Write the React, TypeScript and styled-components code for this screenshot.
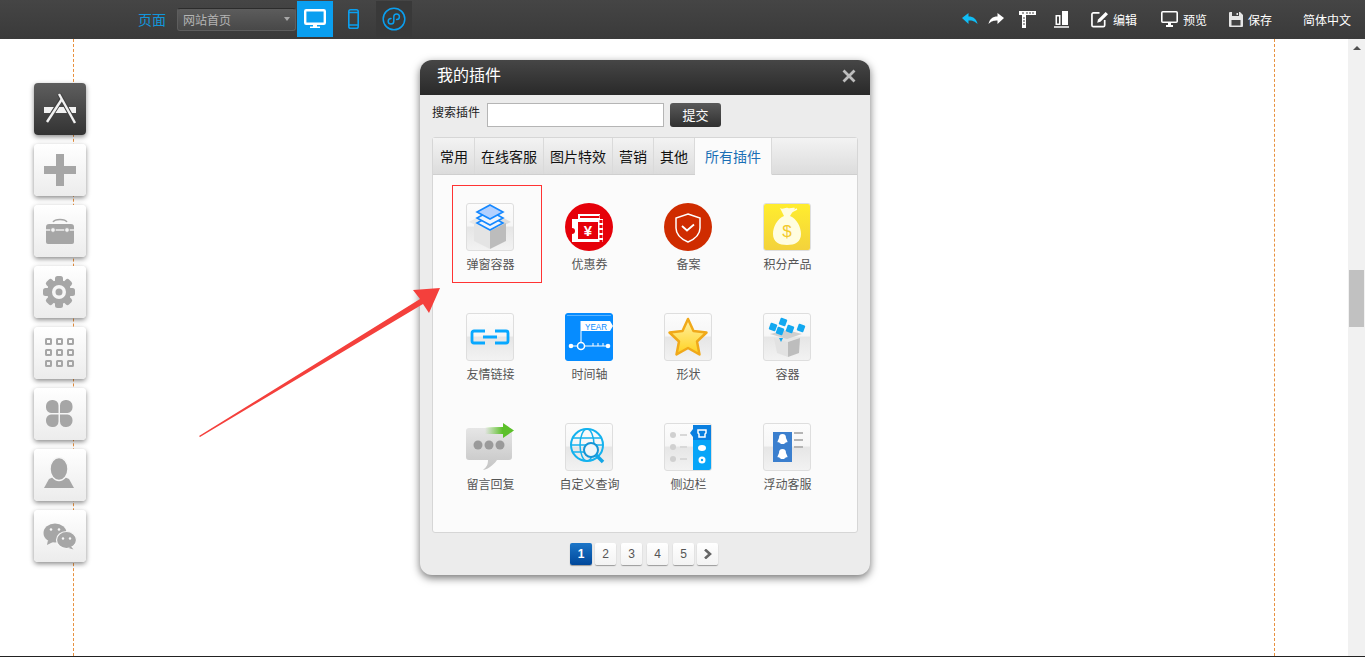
import React, { ReactNode } from 'react'
import styled, { createGlobalStyle } from 'styled-components'

const GlobalStyle = createGlobalStyle`
  html, body {
    margin: 0;
    height: 100%;
    overflow: hidden;
    background: #fff;
    font-family: "Liberation Sans", "Noto Sans CJK SC", sans-serif;
  }
`

const Page = styled.div`
  height: 657px;
  box-sizing: border-box;
  border-bottom: 1px solid #222;
  display: flex;
  flex-direction: column;
  position: relative;
  overflow: hidden;
`

/* top bar */
const TopBar = styled.header`
  flex: none;
  height: 39px;
  box-sizing: border-box;
  padding: 1px 14px 2px 138px;
  display: flex;
  align-items: center;
  background: linear-gradient(#454545, #3a3a3a);
`

const PageLabel = styled.span`
  font-size: 14px;
  color: #1296db;
  margin-right: 11px;
`

const PageSelect = styled.div`
  width: 119px;
  height: 23px;
  box-sizing: border-box;
  padding-left: 5px;
  margin-right: 1px;
  display: flex;
  align-items: center;
  justify-content: space-between;
  font-size: 12px;
  color: #b4b4b4;
  background: linear-gradient(#5c5c5c, #484848);
  border: 1px solid #5e5e5e;
  border-top-color: #2c2c2c;
  border-radius: 3px;

  &::after {
    content: '';
    margin-right: 5px;
    border-left: 3px solid transparent;
    border-right: 3px solid transparent;
    border-top: 4px solid #a8a8a8;
  }
`

const DeviceButton = styled.button<{ $active?: boolean; $dark?: boolean; $width: number }>`
  width: ${({ $width }) => $width}px;
  height: 36px;
  padding: 0;
  border: 0;
  margin-left: ${({ $dark }) => ($dark ? 3 : 0)}px;
  display: flex;
  align-items: center;
  justify-content: center;
  background: ${({ $active, $dark }) => ($active ? '#0a9ff0' : $dark ? '#393939' : 'transparent')};
`

const TopActions = styled.div`
  margin-left: auto;
  display: flex;
  align-items: center;
`

const TopAction = styled.span<{ $left: number }>`
  margin-left: ${({ $left }) => $left}px;
  display: flex;
  align-items: center;
  gap: 5px;
  font-size: 12px;
  color: #fff;
`

/* scrolling area */
const Body = styled.main`
  flex: 1;
  min-height: 0;
  display: flex;
`

const Workspace = styled.div`
  flex: 1;
  padding-left: 73px;
`

const SiteFrame = styled.div`
  width: 1202px;
  height: 100%;
  box-sizing: border-box;
  border-left: 1px dashed #e8913f;
  border-right: 1px dashed #e8913f;
`

const ScrollTrack = styled.div`
  flex: none;
  width: 17px;
  background: #f1f1f1;
  display: flex;
  flex-direction: column;
  align-items: center;

  &::before {
    content: '';
    margin-top: 7px;
    border-left: 4px solid transparent;
    border-right: 4px solid transparent;
    border-bottom: 4px solid #505050;
  }
`

const ScrollThumb = styled.div`
  width: 15px;
  height: 57px;
  margin-top: 220px;
  background: #c1c1c1;
`

/* left tool column */
const ToolColumn = styled.nav`
  position: absolute;
  left: 34px;
  top: 83px;
  display: flex;
  flex-direction: column;
  gap: 9px;
`

const ToolButton = styled.div<{ $active?: boolean }>`
  width: 52px;
  height: 52px;
  border-radius: 4px;
  background: ${({ $active }) =>
    $active ? 'linear-gradient(#5e5e5e, #333)' : 'linear-gradient(#fff, #ececec)'};
  box-shadow: 0 2px 5px rgba(0, 0, 0, 0.45);

  svg {
    display: block;
  }
`

/* plugin dialog */
const Dialog = styled.section`
  position: absolute;
  left: 420px;
  top: 60px;
  width: 450px;
  height: 515px;
  border-radius: 12px;
  background: #ececec;
  box-shadow: 0 3px 9px rgba(0, 0, 0, 0.55);
  display: flex;
  flex-direction: column;
`

const DialogHeader = styled.div`
  flex: none;
  height: 35px;
  box-sizing: border-box;
  padding: 0 14px 4px 17px;
  display: flex;
  align-items: center;
  justify-content: space-between;
  border-radius: 12px 12px 0 0;
  background: linear-gradient(#464646, #292929);
  color: #fff;
  font-size: 16px;
`

const DialogTitle = styled.span`
  margin-top: -3px;
`

const SearchRow = styled.form`
  flex: none;
  height: 24px;
  margin-top: 8px;
  padding-left: 12px;
  display: flex;
  align-items: flex-start;
`

const SearchLabel = styled.label`
  width: 55px;
  font-size: 12px;
  line-height: 20px;
  color: #222;
`

const SearchInput = styled.input`
  width: 177px;
  height: 24px;
  box-sizing: border-box;
  border: 1px solid #b5b5b5;
  background: #fff;
  margin: 0 6px 0 0;
`

const SubmitButton = styled.button`
  width: 51px;
  height: 24px;
  padding: 0 0 2px;
  border: 0;
  border-radius: 3px;
  color: #fff;
  font-size: 13px;
  font-family: inherit;
  background: linear-gradient(#5a5a5a, #303030);
`

const TabPanel = styled.div`
  flex: none;
  width: 426px;
  height: 396px;
  box-sizing: border-box;
  margin: 10px 0 0 12px;
  border: 1px solid #d6d6d6;
  border-radius: 3px;
  background: #fbfbfb;
`

const TabBar = styled.div`
  height: 37px;
  box-sizing: border-box;
  padding-left: 1px;
  display: flex;
  background: linear-gradient(#f3f3f3, #dcdcdc);
  border-bottom: 1px solid #cfcfcf;
`

const Tab = styled.div<{ $active?: boolean }>`
  padding: 0 ${({ $active }) => ($active ? 10 : 6)}px;
  height: 36px;
  margin-bottom: ${({ $active }) => ($active ? -1 : 0)}px;
  box-sizing: content-box;
  display: flex;
  align-items: center;
  font-size: 14px;
  border-right: 1px solid #dadada;
  border-bottom: ${({ $active }) => ($active ? '1px solid #fbfbfb' : '0')};
  color: ${({ $active }) => ($active ? '#1a6fb5' : '#111')};
  background: ${({ $active }) => ($active ? '#fbfbfb' : 'transparent')};
`

const PluginGrid = styled.div`
  padding: 28px 0 0 7px;
  display: grid;
  grid-template-columns: repeat(4, 99px);
  grid-auto-rows: 110px;
`

const PluginItem = styled.div`
  display: flex;
  flex-direction: column;
  align-items: center;
  gap: 7px;
  font-size: 12px;
  line-height: 14px;
  color: #555;
`

const PluginName = styled.span`
  margin-left: 2px;
`

const IconBox = styled.div<{ $plain?: boolean }>`
  width: 48px;
  height: 48px;
  box-sizing: border-box;
  border-radius: 3px;
  overflow: hidden;
  border: ${({ $plain }) => ($plain ? '0' : '1px solid #dedede')};
  background: ${({ $plain }) =>
    $plain ? 'transparent' : 'linear-gradient(#fcfcfc 0, #f6f6f6 48%, #e6e6e6 50%, #f2f2f2 100%)'};

  svg {
    display: block;
    width: 100%;
    height: 100%;
  }
`

const Pager = styled.div`
  flex: none;
  margin-top: 10px;
  padding-left: 150px;
  display: flex;
  gap: 5px;
`

const PageButton = styled.div<{ $active?: boolean; $arrow?: boolean }>`
  width: ${({ $active }) => ($active ? 22 : 21)}px;
  height: 22px;
  margin-right: ${({ $active }) => ($active ? -2 : 0)}px;
  margin-left: ${({ $arrow }) => ($arrow ? -2 : 0)}px;
  border-radius: 2px;
  display: flex;
  align-items: center;
  justify-content: center;
  font-size: 12px;
  font-weight: ${({ $active }) => ($active ? 700 : 400)};
  color: ${({ $active }) => ($active ? '#fff' : '#555')};
  background: ${({ $active }) => ($active ? 'linear-gradient(#1c76c8, #00479a)' : 'linear-gradient(#fff, #f3f3f3)')};
  box-shadow: 0 1px 1px rgba(0, 0, 0, 0.35);
`

/* annotations drawn over the screenshot */
const RedFrame = styled.div`
  position: absolute;
  left: 452px;
  top: 185px;
  width: 90px;
  height: 98px;
  box-sizing: border-box;
  border: 1px solid #f33;
`

const RedArrow = styled.svg`
  position: absolute;
  left: 195px;
  top: 283px;
`

const GREY = '#a6a6a6'

const Tool = ({ children }: { children: ReactNode }) => (
  <svg width="52" height="52" viewBox="0 0 52 52">
    {children}
  </svg>
)

const toolIcons: ReactNode[] = [
  <Tool key="app">
    <rect x="10" y="24" width="32" height="6" fill="#f2f2f2" />
    <path d="M25 11 L41 40 M27 17 L13 39" stroke="#3f3f3f" strokeWidth="4.5" />
    <path d="M25 11 L41 40" stroke="#f2f2f2" strokeWidth="2.4" />
    <path d="M28 16 L13 39" stroke="#f2f2f2" strokeWidth="2.4" />
  </Tool>,
  <Tool key="plus">
    <path d="M22 10h8v12h12v8H30v12h-8V30H10v-8h12z" fill={GREY} />
  </Tool>,
  <Tool key="case">
    <path d="M19 17c2-3.500 12-3.500 14 0" fill="none" stroke={GREY} strokeWidth="1.500" />
    <path d="M12 22a3 3 0 0 1 3-3h22a3 3 0 0 1 3 3v15a2 2 0 0 1-2 2H14a2 2 0 0 1-2-2z" fill={GREY} />
    <path d="M12 25h28" stroke="#f4f4f4" strokeWidth="1.400" />
    <circle cx="19" cy="25" r="2.400" fill="#f4f4f4" stroke={GREY} strokeWidth="1" />
    <circle cx="33" cy="25" r="2.400" fill="#f4f4f4" stroke={GREY} strokeWidth="1" />
  </Tool>,
  <Tool key="gear">
    {[0, 45, 90, 135].map((a) => (
      <rect key={a} x="21" y="10" width="8" height="32" rx="2.500" fill={GREY} transform={`rotate(${a} 25 26)`} />
    ))}
    <circle cx="25" cy="26" r="12" fill={GREY} />
    <circle cx="25" cy="26" r="7" fill="#f6f6f6" />
    <circle cx="25" cy="26" r="3.500" fill={GREY} />
  </Tool>,
  <Tool key="grid">
    {[11, 22, 33].map((y) =>
      [11, 22, 33].map((x) => (
        <rect key={`${x}-${y}`} x={x + 1} y={y + 1} width="5" height="5" fill="none" stroke={GREY} strokeWidth="2" rx="0.500" />
      )),
    )}
  </Tool>,
  <Tool key="clover">
    <path d="M24.500 25H17a5.500 5.500 0 0 1-5-5.500V18a6 6 0 0 1 6-6h1a5.500 5.500 0 0 1 5.500 5.500z" fill={GREY} />
    <path d="M26 25h7.500a5.500 5.500 0 0 0 5-5.500V18a6 6 0 0 0-6-6h-1A5.500 5.500 0 0 0 26 17.500z" fill={GREY} />
    <path d="M24.500 26.500H17a5.500 5.500 0 0 0-5 5.500v1a6 6 0 0 0 6 6h1a5.500 5.500 0 0 0 5.500-5.500z" fill={GREY} />
    <path d="M26 26.500h7.500a5.500 5.500 0 0 1 5 5.500v1a6 6 0 0 1-6 6h-1a5.500 5.500 0 0 1-5.500-5.500z" fill={GREY} />
  </Tool>,
  <Tool key="user">
    <path d="M10 39l5-9 7-3h6l7 3 5 9z" fill={GREY} />
    <ellipse cx="25" cy="20" rx="9" ry="11.500" fill={GREY} stroke="#f6f6f6" strokeWidth="1.500" />
  </Tool>,
  <Tool key="wechat">
    <ellipse cx="21" cy="23" rx="11.500" ry="9.500" fill={GREY} />
    <path d="M14 30l-1 5 6-3z" fill={GREY} />
    <circle cx="17" cy="19.500" r="1.300" fill="#f6f6f6" />
    <circle cx="25" cy="19.500" r="1.300" fill="#f6f6f6" />
    <ellipse cx="32.500" cy="30" rx="10" ry="8.500" fill={GREY} stroke="#f6f6f6" strokeWidth="1.200" />
    <path d="M37 36.500l2.500 3-5-1.500z" fill={GREY} />
    <circle cx="29" cy="28.500" r="1.200" fill="#f6f6f6" />
    <circle cx="36" cy="28.500" r="1.200" fill="#f6f6f6" />
  </Tool>,
]

const Art = ({ children }: { children: ReactNode }) => (
  <svg viewBox="0 0 46 46">{children}</svg>
)

const Layer = ({ y, fill }: { y: number; fill: string }) => (
  <path d={`M23 ${y}l13 7-13 7-13-7z`} fill={fill} stroke="#1588ff" strokeWidth="1.600" />
)

const Cube = ({ x, y }: { x: number; y: number }) => (
  <rect x={x - 3.5} y={y - 3.5} width="7" height="7" rx="1" fill="#12a8f0" transform={`rotate(20 ${x} ${y})`} />
)

const plugins: { name: string; plain?: boolean; art: ReactNode }[] = [
  {
    name: '弹窗容器',
    art: (
      <Art>
        <path d="M2 18l11-6 10 5-10 6z" fill="#e9e9e9" />
        <path d="M44 18l-11-6-10 5 10 6z" fill="#dedede" />
        <path d="M7 19l16 8v18L7 37z" fill="#e4e4e4" />
        <path d="M39 19l-16 8v18l16-8z" fill="#bcbcbc" />
        <Layer y={12} fill="#eef4fd" />
        <Layer y={7} fill="#eef4fd" />
        <Layer y={1} fill="#b4d1ff" />
      </Art>
    ),
  },
  {
    name: '优惠券',
    plain: true,
    art: (
      <svg viewBox="0 0 48 48">
        <circle cx="24" cy="24" r="24" fill="#e60009" />
        <path d="M7 16h31v23H7v-8a3 3 0 0 0 0-6zM13 11h22v5H13z" fill="#fff" />
        <path d="M13 19h20v17H13zM15 13h19v2H15z" fill="#e60009" />
        <path d="M36 12v27" stroke="#e60009" strokeWidth="3" strokeDasharray="3 2" />
        <text x="23" y="33" textAnchor="middle" fontSize="15" fontWeight="700" fill="#fff" fontFamily="Liberation Sans">¥</text>
      </svg>
    ),
  },
  {
    name: '备案',
    plain: true,
    art: (
      <svg viewBox="0 0 48 48">
        <circle cx="24" cy="24" r="24" fill="#cf2c00" />
        <path d="M24 11l12 4v10c0 7-5 11-12 14-7-3-12-7-12-14V15z" fill="none" stroke="#fff" strokeWidth="1.500" />
        <path d="M18 23l5 4.500 7-6" fill="none" stroke="#fff" strokeWidth="1.800" />
      </svg>
    ),
  },
  {
    name: '积分产品',
    art: (
      <svg viewBox="0 0 46 46">
        <defs>
          <linearGradient id="gold" x1="0" y1="0" x2="0" y2="1">
            <stop offset="0" stopColor="#ffed2e" />
            <stop offset="1" stopColor="#f3d23c" />
          </linearGradient>
        </defs>
        <rect width="46" height="46" fill="url(#gold)" />
        <path d="M16 4c3 2 5-1 8 0 2 .8 5-1 7 0l-5 8c7 3 11 11 11 18 0 8-6 11-14 11S9 38 9 30c0-7 4-15 11-18z" fill="#fffde0" />
        <path d="M27 8l6-3" stroke="#fffde0" strokeWidth="1.500" />
        <text x="23" y="33" textAnchor="middle" fontSize="17" fill="#f2c92c" fontFamily="Liberation Sans">$</text>
      </svg>
    ),
  },
  {
    name: '友情链接',
    art: (
      <Art>
        <path
          d="M18 17H7a2 2 0 0 0-2 2v8a2 2 0 0 0 2 2h11M28 17h11a2 2 0 0 1 2 2v8a2 2 0 0 1-2 2H28M16 23h14"
          fill="none"
          stroke="#08a8ff"
          strokeWidth="2.800"
        />
      </Art>
    ),
  },
  {
    name: '时间轴',
    plain: true,
    art: (
      <svg viewBox="0 0 48 48">
        <rect width="48" height="48" rx="2" fill="#068cff" />
        <path d="M2 2.500h44" stroke="#5cb4ff" strokeWidth="1" />
        <path d="M16 8h29l3 5-3 5H16z" fill="#fff" />
        <text x="20" y="16.500" fontSize="9" textLength="22" lengthAdjust="spacingAndGlyphs" fill="#068cff" fontFamily="Liberation Sans">YEAR</text>
        <path d="M16 8v24M6 33h36" stroke="#fff" strokeWidth="1" />
        <path d="M28 30v3M33 30v3M38 30v3" stroke="#fff" strokeWidth="1" />
        <circle cx="16" cy="33" r="3.500" fill="#068cff" stroke="#fff" strokeWidth="1.500" />
        <circle cx="6" cy="33" r="2.300" fill="#fff" />
        <circle cx="43" cy="33" r="2.300" fill="#fff" />
      </svg>
    ),
  },
  {
    name: '形状',
    art: (
      <svg viewBox="0 0 46 46">
        <defs>
          <linearGradient id="star" x1="0" y1="0" x2="0" y2="1">
            <stop offset="0" stopColor="#fff0a6" />
            <stop offset="1" stopColor="#ffd21e" />
          </linearGradient>
        </defs>
        <path
          d="M23 5l5.500 12 13 1.500-9.500 9 2.500 13L23 34l-11.500 6.500L14 27.500l-9.500-9 13-1.500z"
          fill="url(#star)"
          stroke="#f0a91a"
          strokeWidth="2.500"
          strokeLinejoin="round"
        />
      </svg>
    ),
  },
  {
    name: '容器',
    art: (
      <Art>
        <path d="M10 24l14 4v15l-11-4z" fill="#e2e2e2" />
        <path d="M36 24l-12 4v15l11-4z" fill="#bdbdbd" />
        <path d="M6 20l17 5 15-5-15-4z" fill="#cfcfcf" />
        <Cube x={19} y={8} />
        <Cube x={9} y={13} />
        <Cube x={16} y={17} />
        <Cube x={26} y={15} />
        <Cube x={37} y={14} />
        <path d="M15 24h4l-2 4z" fill="#12a8f0" />
      </Art>
    ),
  },
  {
    name: '留言回复',
    plain: true,
    art: (
      <svg viewBox="0 0 48 48">
        <defs>
          <linearGradient id="bubble" x1="0" y1="0" x2="0" y2="1">
            <stop offset="0" stopColor="#e6e6e6" />
            <stop offset="1" stopColor="#c4c4c4" />
          </linearGradient>
          <linearGradient id="go" x1="0" y1="0" x2="1" y2="0">
            <stop offset="0" stopColor="#6cc73a" stopOpacity="0" />
            <stop offset="0.6" stopColor="#5cc02a" />
          </linearGradient>
        </defs>
        <path d="M3 5h40a3 3 0 0 1 3 3v26a3 3 0 0 1-3 3H31c-4 6-11 10-14 10 4-3 5-6 5-10H3a3 3 0 0 1-3-3V8a3 3 0 0 1 3-3z" fill="url(#bubble)" />
        <circle cx="12" cy="22" r="4.500" fill="#9a9a9a" />
        <circle cx="23" cy="22" r="4.500" fill="#9a9a9a" />
        <circle cx="34" cy="22" r="4.500" fill="#9a9a9a" />
        <path d="M19 4h18V0l11 7.500L37 15v-4H19z" fill="url(#go)" />
      </svg>
    ),
  },
  {
    name: '自定义查询',
    art: (
      <Art>
        <g fill="none" stroke="#14b2ee" strokeWidth="1.500">
          <circle cx="21" cy="21" r="16" strokeWidth="2" />
          <ellipse cx="21" cy="21" rx="7" ry="16" />
          <path d="M6 14h30M5 21h32M6 28h14" />
        </g>
        <circle cx="25" cy="26" r="7" fill="#eef6fa" stroke="#1495d6" strokeWidth="2" />
        <path d="M30 31l7 7" stroke="#14a6e6" strokeWidth="3.500" />
      </Art>
    ),
  },
  {
    name: '侧边栏',
    art: (
      <Art>
        <circle cx="8" cy="11" r="3" fill="#d0d0d0" />
        <circle cx="8" cy="23" r="3" fill="#d0d0d0" />
        <circle cx="8" cy="35" r="3" fill="#d0d0d0" />
        <path d="M15 11h7M15 23h7M15 35h7" stroke="#d8d8d8" strokeWidth="2" />
        <rect x="28" y="1" width="18" height="45" fill="#07a5f8" />
        <rect x="28" y="1" width="18" height="15" fill="#0a7fe0" />
        <path d="M28 5l-3 4 3 4z" fill="#0a7fe0" />
        <path d="M33 6h8v3l-1 1v3h-6v-3l-1-1z" fill="none" stroke="#fff" strokeWidth="1.500" />
        <ellipse cx="37" cy="24" rx="4" ry="3" fill="#fff" />
        <circle cx="37" cy="36" r="3.500" fill="#fff" />
        <circle cx="37" cy="36" r="1.200" fill="#07a5f8" />
      </Art>
    ),
  },
  {
    name: '浮动客服',
    art: (
      <Art>
        <rect x="9" y="8" width="19" height="30" fill="#3b7fce" />
        {[15, 30].map((y) => (
          <path
            key={y}
            d={`M18.500 ${y - 5}c2.500 0 3.500 1.500 3.500 4l1.500 3.500c0 1.200-1 1-1.500.5-.5 1.500-2 2-3.500 2s-3-.5-3.500-2c-.5.5-1.500.7-1.500-.5l1.500-3.500c0-2.500 1-4 3.500-4z`}
            fill="#fff"
          />
        ))}
        <path d="M30 9h9M30 16h9M30 23h9" stroke="#b5b5b5" strokeWidth="2" />
      </Art>
    ),
  },
]

const App = () => (
  <Page>
    <GlobalStyle />
    <TopBar>
      <PageLabel>页面</PageLabel>
      <PageSelect>网站首页</PageSelect>
      <DeviceButton $active $width={36}>
        <svg width="22" height="20" viewBox="0 0 22 20">
          <rect x="1.200" y="1.200" width="19.600" height="13.600" rx="1" fill="none" stroke="#fff" strokeWidth="2.400" />
          <path d="M9 16h4v1.500h3V19H6v-1.500h3z" fill="#fff" />
        </svg>
      </DeviceButton>
      <DeviceButton $width={40}>
        <svg width="11" height="20" viewBox="0 0 11 20">
          <rect x="0.800" y="0.800" width="9.400" height="18.400" rx="1.800" fill="none" stroke="#0a9ff0" strokeWidth="1.600" />
          <path d="M1 3.500h9M1 16h9" stroke="#0a9ff0" strokeWidth="1.400" />
        </svg>
      </DeviceButton>
      <DeviceButton $dark $width={36}>
        <svg width="24" height="24" viewBox="0 0 24 24">
          <circle cx="12" cy="12" r="10.800" fill="none" stroke="#0a9ff0" strokeWidth="1.500" />
          <path
            d="M9 11.500a2.800 2.800 0 1 0 2.800 2.800V9.700a2.800 2.800 0 1 1 2.800 2.800"
            fill="none"
            stroke="#0a9ff0"
            strokeWidth="1.500"
            strokeLinecap="round"
          />
        </svg>
      </DeviceButton>
      <TopActions>
        <TopAction $left={0}>
          <svg width="16" height="12" viewBox="0 0 16 12">
            <path d="M0 5L6.500 0v3.500c5 0 8 2.500 9 7.500-3-3-5-3.500-9-3.500V11z" fill="#10bdf5" />
          </svg>
        </TopAction>
        <TopAction $left={10}>
          <svg width="16" height="12" viewBox="0 0 16 12">
            <path d="M16 5L9.500 0v3.500c-5 0-8 2.500-9 7.500 3-3 5-3.500 9-3.500V11z" fill="#fff" />
          </svg>
        </TopAction>
        <TopAction $left={15}>
          <svg width="17" height="17" viewBox="0 0 17 17">
            <path d="M0 0h17v4H7v13H3V4H0z" fill="#fff" />
            <path d="M3 2h2M8 1v2M11 1v2M14 1v2M4 7h2M4 10h2M4 13h2" stroke="#444" strokeWidth="1" />
          </svg>
        </TopAction>
        <TopAction $left={18}>
          <svg width="15" height="17" viewBox="0 0 15 17">
            <path d="M1.500 4h5v10h-5zM8 0h6v14H8z" fill="#fff" />
            <path d="M0 16h15" stroke="#fff" strokeWidth="1.500" />
            <path d="M3 5.500h2v7H3z" fill="#444" />
          </svg>
        </TopAction>
        <TopAction $left={22}>
          <svg width="17" height="17" viewBox="0 0 18 17">
            <path d="M9 1.500H2.500a1.500 1.500 0 0 0-1.500 1.500v11.500A1.500 1.500 0 0 0 2.500 16h10.500a1.500 1.500 0 0 0 1.500-1.500V9" fill="none" stroke="#fff" strokeWidth="1.800" />
            <path d="M15.500 0.500L18 3l-8 8-3.500 1 1-3.500z" fill="#fff" />
          </svg>
          编辑
        </TopAction>
        <TopAction $left={24}>
          <svg width="17" height="16" viewBox="0 0 17 16">
            <rect x="0.800" y="0.800" width="15.400" height="10.400" rx="1" fill="none" stroke="#fff" strokeWidth="1.600" />
            <path d="M7 12h3v2h2v2H5v-2h2z" fill="#fff" />
          </svg>
          预览
        </TopAction>
        <TopAction $left={22}>
          <svg width="14" height="15" viewBox="0 0 14 15">
            <path d="M0 1a1 1 0 0 1 1-1h10l3 3v11a1 1 0 0 1-1 1H1a1 1 0 0 1-1-1z" fill="#e6e6e6" />
            <path d="M3 0h7v4H3zM2.500 8h9v5.500h-9z" fill="#444" />
            <path d="M7.500 1h1.500v2H7.500z" fill="#e6e6e6" />
          </svg>
          保存
        </TopAction>
        <TopAction $left={31}>简体中文</TopAction>
      </TopActions>
    </TopBar>
    <Body>
      <Workspace>
        <SiteFrame />
      </Workspace>
      <ScrollTrack>
        <ScrollThumb />
      </ScrollTrack>
    </Body>

    <ToolColumn>
      {toolIcons.map((icon, i) => (
        <ToolButton key={i} $active={i === 0}>
          {icon}
        </ToolButton>
      ))}
    </ToolColumn>

    <Dialog>
      <DialogHeader>
        <DialogTitle>我的插件</DialogTitle>
        <svg width="14" height="14" viewBox="0 0 14 14">
          <path d="M1.500 1.500l11 11M12.500 1.500l-11 11" stroke="#bdbdbd" strokeWidth="2.800" />
        </svg>
      </DialogHeader>
      <SearchRow>
        <SearchLabel>搜索插件</SearchLabel>
        <SearchInput />
        <SubmitButton type="button">提交</SubmitButton>
      </SearchRow>
      <TabPanel>
        <TabBar>
          <Tab>常用</Tab>
          <Tab>在线客服</Tab>
          <Tab>图片特效</Tab>
          <Tab>营销</Tab>
          <Tab>其他</Tab>
          <Tab $active>所有插件</Tab>
        </TabBar>
        <PluginGrid>
          {plugins.map((p) => (
            <PluginItem key={p.name}>
              <IconBox $plain={p.plain}>{p.art}</IconBox>
              <PluginName>{p.name}</PluginName>
            </PluginItem>
          ))}
        </PluginGrid>
      </TabPanel>
      <Pager>
        {['1', '2', '3', '4', '5'].map((n) => (
          <PageButton key={n} $active={n === '1'}>
            {n}
          </PageButton>
        ))}
        <PageButton $arrow>
          <svg width="10" height="10" viewBox="0 0 10 10">
            <path d="M2 0.500L7 5l-5 4.500" fill="none" stroke="#666" strokeWidth="2.600" />
          </svg>
        </PageButton>
      </Pager>
    </Dialog>

    <RedFrame />
    <RedArrow width="250" height="158" viewBox="0 0 250 158">
      <path d="M4 153L225 16l-7-9 27-2-11 25-6-9L5 154z" fill="#f4403c" />
    </RedArrow>
  </Page>
)

export default App
